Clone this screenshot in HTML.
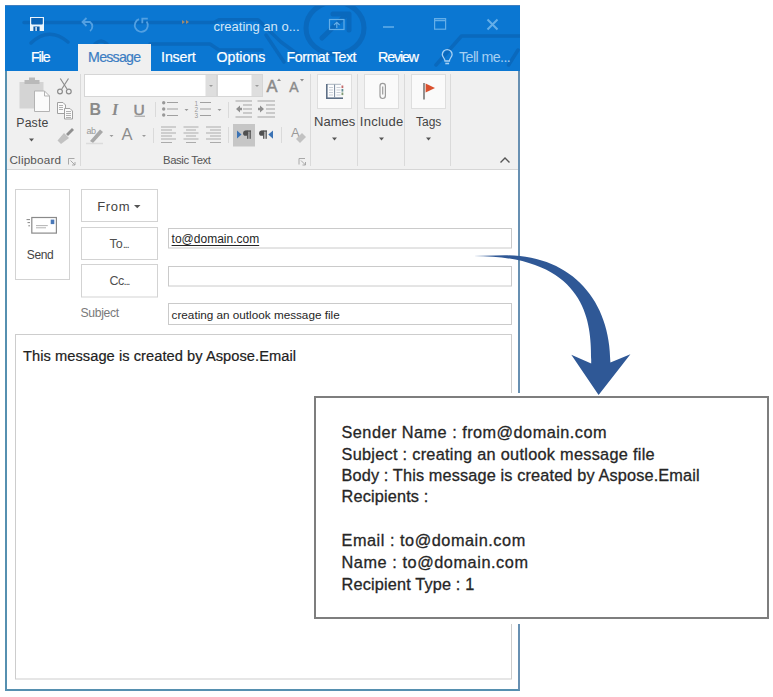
<!DOCTYPE html>
<html><head><meta charset="utf-8">
<style>
*{margin:0;padding:0;box-sizing:border-box}
html,body{width:773px;height:697px;background:#fff;overflow:hidden;font-family:"Liberation Sans",sans-serif}
.t{position:absolute;white-space:nowrap}
.b{position:absolute}
svg{position:absolute;left:0;top:0}
</style></head><body>
<div class="b" style="left:5px;top:5px;width:515px;height:686px;background:#fff;border-left:2px solid #5690b0;border-right:2px solid #6890b2;border-bottom:2px solid #5690b0"></div>
<div class="b" style="left:5px;top:5px;width:515px;height:66px;background:#0b77d2"></div>
<div class="b" style="left:7px;top:71px;width:511px;height:99px;background:#f0f0f0;border-bottom:1px solid #d6d6d6"></div>
<svg width="773" height="697">
<defs><clipPath id="tb"><rect x="5" y="6" width="515" height="65"/></clipPath></defs>
<g clip-path="url(#tb)" fill="none" stroke="#0a68bb" stroke-width="3.5" stroke-linecap="round" stroke-linejoin="round" opacity="0.9">
<path d="M24,22.5 H214 L219,19.7 H258 L281,42 L300,56"/>
<path d="M31,43 Q49,26 68,42"/>
<path d="M95,44 Q101,38 107,44"/>
<path d="M150,44 H210 L219,50 H262"/>
<path d="M266,35 L284,62"/>
<ellipse cx="335" cy="28" rx="29" ry="26" stroke-width="5"/>
<path d="M322,38 L346,15" stroke-width="5"/>
<path d="M333,14 H349 V30" stroke-width="5"/>
<path d="M436,65 L461.5,36 H520"/>
<path d="M508.6,65 L518,50"/>
</g>
</svg>
<svg width="773" height="697">
<rect x="30" y="17" width="14" height="14" fill="#eaf4fc"/>
<path d="M31.2,18 H42.8 V23.5 Q42.8,24.5 41.8,24.5 H32.2 Q31.2,24.5 31.2,23.5 Z" fill="#0b63b6"/>
<rect x="33.4" y="26.5" width="6.2" height="4.5" fill="#0b5aa8"/>
<rect x="35.4" y="27" width="1.4" height="4" fill="#eaf4fc"/>
<rect x="5" y="5" width="515" height="1" fill="#3f7fbf"/>
</svg>
<svg width="773" height="697">
<g fill="none" stroke="#52a0e2" stroke-width="1.8">
<path d="M83,22 H90 A5.5,5.5 0 0 1 90,31"/>
<path d="M86.5,18 L82.5,22 L86.5,26"/>
<path d="M139,19.2 A6.5,6.5 0 1 0 146.6,21.5"/>
<path d="M147.8,18.6 H142.3 V23.2"/>
</g>
<g fill="#a08a70"><path d="M182,20 l3,2 l-3,2z M186,20 l3,2 l-3,2z"/></g>
</svg>
<div class="t" style="left:213.5px;top:19.80px;font-size:13px;line-height:13px;color:#d2e6f7;letter-spacing:0px;font-weight:normal;font-family:'Liberation Sans',sans-serif;">creating an o...</div>
<svg width="773" height="697">
<g fill="none" stroke="#64aee8" stroke-width="1.2">
<rect x="329.5" y="19.5" width="14.5" height="10"/>
<path d="M336.8,28 V22.5 M334,25 L336.8,22.3 L339.6,25"/>
<path d="M383,27 H394" stroke-width="1.5"/>
<rect x="434.6" y="18.6" width="11" height="10.6"/>
<path d="M434.6,20.5 H445.6" stroke-width="1.5"/>
<path d="M487.5,19.5 L497.5,29.5 M497.5,19.5 L487.5,29.5" stroke-width="2"/>
</g>
</svg>
<div class="b" style="left:77.5px;top:44px;width:73px;height:27px;background:#f0f0f0"></div>
<div class="t" style="left:31.0px;top:50.18px;font-size:14.2px;line-height:14.2px;color:#fff;letter-spacing:-1.092px;font-weight:normal;font-family:'Liberation Sans',sans-serif;-webkit-text-stroke:0.2px #fff;">File</div>
<div class="t" style="left:88.1px;top:50.18px;font-size:14.2px;line-height:14.2px;color:#3b7dc3;letter-spacing:-0.763px;font-weight:normal;font-family:'Liberation Sans',sans-serif;-webkit-text-stroke:0.2px #3b7dc3;">Message</div>
<div class="t" style="left:161.1px;top:50.18px;font-size:14.2px;line-height:14.2px;color:#fff;letter-spacing:-0.157px;font-weight:normal;font-family:'Liberation Sans',sans-serif;-webkit-text-stroke:0.2px #fff;">Insert</div>
<div class="t" style="left:216.6px;top:50.18px;font-size:14.2px;line-height:14.2px;color:#fff;letter-spacing:-0.034px;font-weight:normal;font-family:'Liberation Sans',sans-serif;-webkit-text-stroke:0.2px #fff;">Options</div>
<div class="t" style="left:286.6px;top:50.18px;font-size:14.2px;line-height:14.2px;color:#fff;letter-spacing:-0.474px;font-weight:normal;font-family:'Liberation Sans',sans-serif;-webkit-text-stroke:0.2px #fff;">Format Text</div>
<div class="t" style="left:378.1px;top:50.18px;font-size:14.2px;line-height:14.2px;color:#fff;letter-spacing:-1.146px;font-weight:normal;font-family:'Liberation Sans',sans-serif;-webkit-text-stroke:0.2px #fff;">Review</div>
<div class="t" style="left:459.0px;top:50.18px;font-size:14.2px;line-height:14.2px;color:#a6d0f3;letter-spacing:-0.552px;font-weight:normal;font-family:'Liberation Sans',sans-serif;">Tell me...</div>
<svg width="773" height="697">
<g fill="none" stroke="#a6d0f3" stroke-width="1.3">
<path d="M445,61 C445,58.5 442.3,57 442.3,54.5 A4.9,4.9 0 1 1 452.1,54.5 C452.1,57 449.4,58.5 449.4,61 Z"/>
<path d="M445.3,63.5 H449.1" stroke-width="1.6"/>
</g>
</svg>
<svg width="773" height="697">
<!-- group separators -->
<g stroke="#dadada" stroke-width="1">
<path d="M80.5,74 V166"/><path d="M310.5,74 V166"/><path d="M357.5,74 V166"/><path d="M404.5,74 V166"/><path d="M450.5,74 V166"/>
<path d="M155.5,102 V117"/><path d="M228.5,102 V118"/>
<path d="M153.5,128 V143"/><path d="M228.5,127 V143"/><path d="M281.5,127 V143"/>
</g>
<!-- paste -->
<rect x="19.5" y="82" width="24" height="26.5" fill="#d4d4d4"/>
<rect x="24.5" y="80" width="15" height="4" fill="#b9b9b9"/>
<rect x="29" y="77.5" width="6" height="3" fill="#b9b9b9"/>
<path d="M34.5,91 H44.5 L49.5,96 V111.5 H34.5 Z" fill="#fbfbfb" stroke="#b3b3b3"/>
<path d="M44.5,91 V96 H49.5" fill="none" stroke="#b3b3b3"/>
<path d="M29,138.5 h5 l-2.5,3z" fill="#555"/>
<!-- scissors -->
<g fill="none" stroke="#8d8d8d" stroke-width="1.2">
<path d="M60.3,78.5 L67,89 M68.5,78.5 L61.8,89"/>
<circle cx="60" cy="91.5" r="2.4"/><circle cx="68.8" cy="91.5" r="2.4"/>
</g>
<!-- copy -->
<g fill="#fafafa" stroke="#a0a0a0" stroke-width="1">
<path d="M57.5,102.5 H63 L65.5,105 V113.5 H57.5 Z"/>
<path d="M64.5,108.5 H70 L72.5,111 V119 H64.5 Z"/>
</g>
<g stroke="#b0b0b0" stroke-width="1"><path d="M59,105.5 H63 M59,107.5 H63 M59,109.5 H63 M66,111.5 H71 M66,113.5 H71 M66,115.5 H71 M66,117.5 H71"/></g>
<!-- format painter -->
<path d="M66,134 L72,128 L74,130 L68,136 Z" fill="#8f8f8f"/>
<path d="M64,133 L69,138 L61,144 L57.5,140.5 Z" fill="#c2c2c2"/>
<!-- font boxes -->
<rect x="84.5" y="74.5" width="132" height="22" fill="#fff" stroke="#d6d6d6"/>
<rect x="205.5" y="75" width="10.5" height="21" fill="#dedede"/>
<path d="M209,85 h4 l-2,2z" fill="#9a9a9a"/>
<rect x="217.5" y="74.5" width="45" height="22" fill="#fff" stroke="#d6d6d6"/>
<rect x="251.5" y="75" width="10.5" height="21" fill="#dedede"/>
<path d="M255,85 h4 l-2,2z" fill="#9a9a9a"/>
<!-- B I U -->
<text x="89.5" y="114.7" font-family="Liberation Sans" font-weight="bold" font-size="16" fill="#8a8a8a">B</text>
<text x="112" y="114.7" font-family="Liberation Serif" font-style="italic" font-weight="bold" font-size="16" fill="#8a8a8a">I</text>
<text x="133.5" y="114.5" font-family="Liberation Sans" font-size="15.5" fill="#8a8a8a" stroke="#8a8a8a" stroke-width="0.5">U</text>
<path d="M134.5,116.2 H145" stroke="#999" stroke-width="1"/>
<!-- bullets -->
<g fill="#999"><circle cx="163.7" cy="102.8" r="1.7"/><circle cx="163.7" cy="109" r="1.7"/><circle cx="163.7" cy="115" r="1.7"/></g>
<g stroke="#a0a0a0" stroke-width="1.2"><path d="M167,102.5 H178 M167,109 H178 M167,115.5 H178"/></g>
<path d="M184.5,109 h4 l-2,2z" fill="#9a9a9a"/>
<!-- numbering -->
<g font-family="Liberation Sans" font-size="6.5" fill="#999"><text x="194.5" y="105.5">1</text><text x="194.5" y="111.5">2</text><text x="194.5" y="117.5">3</text></g>
<g stroke="#a0a0a0" stroke-width="1.2"><path d="M200,102.5 H211 M200,109 H211 M200,115.5 H211"/></g>
<path d="M217.5,109 h4 l-2,2z" fill="#9a9a9a"/>
<!-- indent -->
<g stroke="#a3a3a3" stroke-width="1"><path d="M235.5,101 H252 M243,105 H252 M243,109 H252 M243,113 H252 M235.5,117 H252"/>
<path d="M257.5,101 H275 M266,105 H275 M266,109 H275 M266,113 H275 M257.5,117 H275"/></g>
<path d="M236,109 L240,105.5 V107.8 H242 V110.2 H240 V112.5 Z" fill="#8f8f8f"/>
<path d="M264,109 L260,105.5 V107.8 H258 V110.2 H260 V112.5 Z" fill="#8f8f8f"/>
<!-- highlighter -->
<text x="86.5" y="133.5" font-family="Liberation Sans" font-size="9" fill="#9a9a9a" letter-spacing="-0.5">ab</text>
<path d="M90,141 L100,129.5 L103,132 L93,143 Z" fill="#a8a8a8"/>
<path d="M86,143.5 H103" stroke="#dcdcdc" stroke-width="1.5"/>
<path d="M109.5,135 h4 l-2,2z" fill="#9a9a9a"/>
<!-- font color A -->
<text x="121.5" y="140" font-family="Liberation Sans" font-size="16.5" fill="#8c8c8c">A</text>
<path d="M142,135 h4 l-2,2z" fill="#9a9a9a"/>
<!-- alignments -->
<g stroke="#ababab" stroke-width="1.1">
<path d="M161,127.0 H176 M161,130.0 H172 M161,133.0 H176 M161,136.0 H172 M161,139.0 H176 M161,142.5 H172 "/>
<path d="M183.5,127.0 H198.5 M186.0,130.0 H196.0 M183.5,133.0 H198.5 M186.0,136.0 H196.0 M183.5,139.0 H198.5 M186.0,142.5 H196.0 "/>
<path d="M206,127.0 H221 M210,130.0 H221 M206,133.0 H221 M210,136.0 H221 M206,139.0 H221 M210,142.5 H221 "/>
</g>
<!-- LTR highlighted -->
<rect x="233" y="124" width="22" height="22.5" fill="#c6c6c6"/>
<path d="M237,130.5 L241.5,134.5 L237,138.5 Z" fill="#3b73b5"/>
<g fill="#505050">
<ellipse cx="245.6" cy="133.2" rx="2.5" ry="2.6"/><rect x="245.6" y="130.5" width="5.2" height="1.2"/><rect x="247.1" y="130.5" width="1.3" height="8.3"/><rect x="249.5" y="130.5" width="1.3" height="8.3"/>
<ellipse cx="261.6" cy="133.2" rx="2.5" ry="2.6"/><rect x="261.6" y="130.5" width="5.2" height="1.2"/><rect x="263.1" y="130.5" width="1.3" height="8.3"/><rect x="265.5" y="130.5" width="1.3" height="8.3"/>
</g>
<path d="M273,130.5 L268.3,134.6 L273,138.7 Z" fill="#3b73b5"/>
<!-- clear formatting -->
<text x="291" y="137" font-family="Liberation Sans" font-size="13" fill="#9a9a9a">A</text>
<path d="M296,139 L302,133 L306,137 L300,143 Z" fill="#c2c2c2"/>
<!-- grow/shrink font -->
<text x="266.5" y="92.4" font-family="Liberation Sans" font-size="16.5" fill="#8a8a8a" stroke="#8a8a8a" stroke-width="0.5">A</text>
<path d="M277,81 l2,-2.5 l2,2.5z" fill="#8c8c8c"/>
<text x="289.3" y="92.4" font-family="Liberation Sans" font-size="14" fill="#8a8a8a" stroke="#8a8a8a" stroke-width="0.4">A</text>
<path d="M300,79 l2,2.5 l2,-2.5z" fill="#8c8c8c"/>
<!-- launchers -->
<g fill="none" stroke="#a0a0a0" stroke-width="0.9">
<path d="M68.5,164.5 V158.5 H74.5"/><path d="M70.5,160.5 L75,165 M72,165 H75 V162"/>
<path d="M299,164.5 V158.5 H305"/><path d="M301,160.5 L305.5,165 M302.5,165 H305.5 V162"/>
</g>
<!-- names include tags -->
<g fill="#fafafa" stroke="#dedede">
<rect x="317.5" y="74.5" width="34" height="34"/>
<rect x="364.5" y="74.5" width="34" height="34"/>
<rect x="411.5" y="74.5" width="34" height="34"/>
</g>
<!-- book -->
<rect x="327" y="84" width="14.5" height="13.5" fill="#fbfcfd"/>
<path d="M327,84.3 H341" stroke="#a9b3bf" stroke-width="1"/>
<rect x="326" y="84" width="1.6" height="15" fill="#5d6f86"/>
<rect x="326" y="97.4" width="17" height="1.6" fill="#5d6f86"/>
<rect x="334" y="84.5" width="1.1" height="13" fill="#8391a3"/>
<g stroke="#c3cad3" stroke-width="0.9"><path d="M329,87.5 H333 M329,90 H333 M329,92.5 H333 M329,95 H333 M336.5,87.5 H340.5 M336.5,90 H340.5 M336.5,92.5 H340.5 M336.5,95 H340.5"/></g>
<rect x="341.5" y="85.5" width="1.8" height="2.6" fill="#c46a6a"/><rect x="341.5" y="89" width="1.8" height="2.6" fill="#5f8c92"/><rect x="341.5" y="92.5" width="1.8" height="2.6" fill="#7f9a72"/>
<!-- paperclip -->
<path d="M385.4,88 V95.8 A2.7,2.7 0 0 1 380,95.8 V86 A2.7,2.7 0 0 1 385.4,86 V88 M382.7,86.5 V94.5" fill="none" stroke="#9c9c9c" stroke-width="1.2"/>
<!-- flag -->
<path d="M424,83 V99.5" stroke="#5a5a5a" stroke-width="1.3"/>
<path d="M425.6,83.4 L435,88 L425.6,92.6 Z" fill="#d9502e"/>
<g fill="#555"><path d="M332,137.5 h5 l-2.5,3z"/><path d="M379,137.5 h5 l-2.5,3z"/><path d="M426,137.5 h5 l-2.5,3z"/></g>
<path d="M500.5,162.5 L505,158 L509.5,162.5" fill="none" stroke="#555" stroke-width="1.4"/>
</svg>
<div class="t" style="left:16.3px;top:116.89px;font-size:12.3px;line-height:12.3px;color:#444;letter-spacing:0.137px;font-weight:normal;font-family:'Liberation Sans',sans-serif;">Paste</div>
<div class="t" style="left:9.5px;top:154.00px;font-size:11.7px;line-height:11.7px;color:#555;letter-spacing:0.184px;font-weight:normal;font-family:'Liberation Sans',sans-serif;">Clipboard</div>
<div class="t" style="left:163.0px;top:155.13px;font-size:11.3px;line-height:11.3px;color:#555;letter-spacing:-0.365px;font-weight:normal;font-family:'Liberation Sans',sans-serif;">Basic Text</div>
<div class="t" style="left:314.0px;top:115.30px;font-size:13px;line-height:13px;color:#444;letter-spacing:0.028px;font-weight:normal;font-family:'Liberation Sans',sans-serif;">Names</div>
<div class="t" style="left:359.8px;top:115.30px;font-size:13px;line-height:13px;color:#444;letter-spacing:0.263px;font-weight:normal;font-family:'Liberation Sans',sans-serif;">Include</div>
<div class="t" style="left:416.0px;top:116.14px;font-size:12px;line-height:12px;color:#444;letter-spacing:0px;font-weight:normal;font-family:'Liberation Sans',sans-serif;">Tags</div>
<svg width="773" height="697">
<g fill="#fff" stroke="#d3d3d3">
<rect x="15.5" y="189.5" width="54" height="90"/>
<rect x="81.5" y="189.5" width="76" height="32"/>
<rect x="81.5" y="227.5" width="76" height="32"/>
<rect x="81.5" y="264.5" width="76" height="32.5"/>
</g>
<g fill="#fff" stroke="#cacaca">
<rect x="168.5" y="228.5" width="343" height="19.5"/>
<rect x="168.5" y="266.5" width="343" height="19.5"/>
<rect x="168.5" y="303.5" width="343" height="21"/>
</g>
<rect x="15.5" y="334.5" width="496" height="344.5" fill="#fff" stroke="#cdcdcd"/>
<!-- envelope -->
<rect x="31.8" y="217.5" width="24.6" height="15.6" fill="#fff" stroke="#8a8a8a" stroke-width="1.2"/>
<rect x="50.7" y="219.6" width="3.6" height="4.5" fill="#4a78b8"/>
<g stroke="#aaa" stroke-width="0.9"><path d="M36,225.6 H47.8 M36,227.8 H46"/></g>
<g stroke="#888" stroke-width="1"><path d="M26.5,219.6 H30 M27.5,222.6 H30 M28.3,225.8 H30"/></g>
<path d="M134,205 h6.5 l-3.25,3.3z" fill="#555"/>
</svg>
<div class="t" style="left:26.8px;top:249.04px;font-size:12px;line-height:12px;color:#444;letter-spacing:-0.4px;font-weight:normal;font-family:'Liberation Sans',sans-serif;">Send</div>
<div class="t" style="left:97.2px;top:200.20px;font-size:13px;line-height:13px;color:#444;letter-spacing:0.652px;font-weight:normal;font-family:'Liberation Sans',sans-serif;">From</div>
<div class="t" style="left:109.5px;top:237.92px;font-size:12.5px;line-height:12.5px;color:#4f4f4f;letter-spacing:0px;font-weight:normal;font-family:'Liberation Sans',sans-serif;">To<span style="font-size:11.5px;letter-spacing:-1.3px">...</span></div>
<div class="t" style="left:109.5px;top:275.42px;font-size:12.5px;line-height:12.5px;color:#4f4f4f;letter-spacing:-0.6px;font-weight:normal;font-family:'Liberation Sans',sans-serif;">Cc<span style="font-size:11.5px;letter-spacing:-1.3px">...</span></div>
<div class="t" style="left:80.6px;top:307.07px;font-size:12.2px;line-height:12.2px;color:#7a7a7a;letter-spacing:-0.359px;font-weight:normal;font-family:'Liberation Sans',sans-serif;">Subject</div>
<div class="t" style="left:171.6px;top:232.64px;font-size:12px;line-height:12px;color:#262626;letter-spacing:0px;font-weight:normal;font-family:'Liberation Sans',sans-serif;text-decoration:underline;text-underline-offset:1.5px;">to@domain.com</div>
<div class="t" style="left:171.6px;top:308.87px;font-size:11.73px;line-height:11.73px;color:#262626;letter-spacing:0px;font-weight:normal;font-family:'Liberation Sans',sans-serif;">creating an outlook message file</div>
<div class="t" style="left:23.0px;top:349.38px;font-size:14.67px;line-height:14.67px;color:#222;letter-spacing:0.046px;font-weight:normal;font-family:'Liberation Sans',sans-serif;-webkit-text-stroke:0.2px #222;">This message is created by Aspose.Email</div>
<div class="b" style="left:309px;top:392.5px;width:464px;height:231px;background:#fff"></div>
<div class="b" style="left:314.2px;top:396px;width:454.8px;height:222.8px;background:#fff;border:2px solid #7e7e7e"></div>
<div class="t" style="left:341.5px;top:423.70px;font-size:16.3px;line-height:16.3px;color:#262626;letter-spacing:0.472px;font-weight:normal;font-family:'Liberation Sans',sans-serif;-webkit-text-stroke:0.3px #262626;">Sender Name : from@domain.com</div>
<div class="t" style="left:341.5px;top:445.70px;font-size:16.3px;line-height:16.3px;color:#262626;letter-spacing:0.286px;font-weight:normal;font-family:'Liberation Sans',sans-serif;-webkit-text-stroke:0.3px #262626;">Subject : creating an outlook message file</div>
<div class="t" style="left:341.5px;top:466.90px;font-size:16.3px;line-height:16.3px;color:#262626;letter-spacing:0.141px;font-weight:normal;font-family:'Liberation Sans',sans-serif;-webkit-text-stroke:0.3px #262626;">Body : This message is created by Aspose.Email</div>
<div class="t" style="left:341.5px;top:488.30px;font-size:16.3px;line-height:16.3px;color:#262626;letter-spacing:0.166px;font-weight:normal;font-family:'Liberation Sans',sans-serif;-webkit-text-stroke:0.3px #262626;">Recipients :</div>
<div class="t" style="left:341.5px;top:531.50px;font-size:16.3px;line-height:16.3px;color:#262626;letter-spacing:0.531px;font-weight:normal;font-family:'Liberation Sans',sans-serif;-webkit-text-stroke:0.3px #262626;">Email : to@domain.com</div>
<div class="t" style="left:341.5px;top:553.50px;font-size:16.3px;line-height:16.3px;color:#262626;letter-spacing:0.563px;font-weight:normal;font-family:'Liberation Sans',sans-serif;-webkit-text-stroke:0.3px #262626;">Name : to@domain.com</div>
<div class="t" style="left:341.5px;top:575.70px;font-size:16.3px;line-height:16.3px;color:#262626;letter-spacing:0.163px;font-weight:normal;font-family:'Liberation Sans',sans-serif;-webkit-text-stroke:0.3px #262626;">Recipient Type : 1</div>
<svg width="773" height="697"><path fill="#2f5896" d="M473.5,255.9 L505,255.3 C572,255.3 610.4,300.6 610.4,362.6 L630.4,354.3 L598.6,394.9 L571.3,354.8 L591.2,363.6 C591.2,330.3 593.5,255.9 473.5,255.9 Z"/></svg>
</body></html>
